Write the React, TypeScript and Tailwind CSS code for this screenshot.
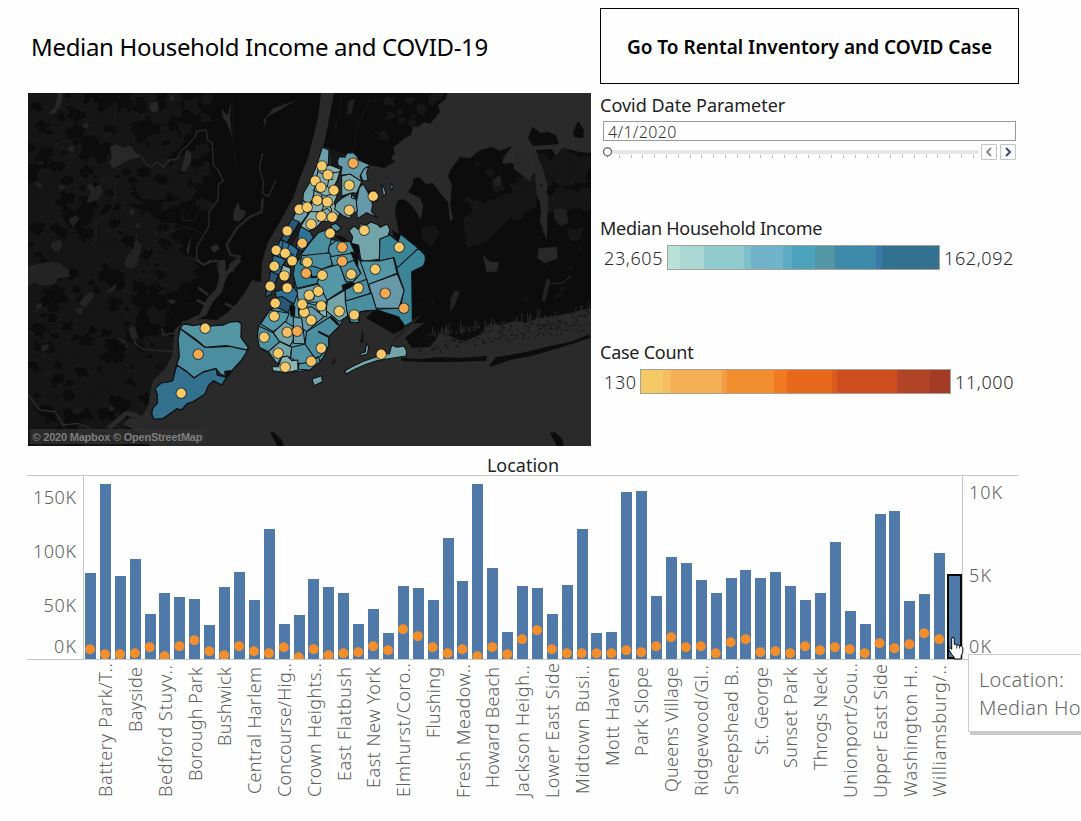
import React from "react";

const FONT = "font-['Noto_Sans','Open_Sans',sans-serif]";

/* ---------- map ---------- */

const LAND = [
  "28,93 321,93 318,118 313,138 308,158 301,175 293,198 281,220 268,242 262,262 261,282 252,280 245,292 237,303 228,312 217,320 205,319 182,321 178,335 176,353 168,366 153,380 149,398 148,412 141,420 131,417 122,424 140,432 150,446 28,446",
  "334,93 447,93 446,99 438,105 440,112 430,124 424,122 418,127 413,126 411,135 405,138 399,143 393,148 395,153 391,158 395,162 384,168 374,166 367,165 345,155 326,147 323,148 328,125",
  "397,201 403,199 408,202 416,211 421,220 423,205 420,198 408,192 413,184 413,179 419,177 426,184 433,183 440,193 448,202 450,222 453,218 450,205 452,185 448,176 451,169 460,157 470,158 480,150 492,147 500,151 512,146 505,156 502,163 512,163 520,170 533,173 543,180 540,200 541,214 546,238 547,225 545,200 548,185 541,165 536,150 552,149 556,156 563,148 580,152 591,153 591,308 570,313 555,316 540,318 525,323 514,321 500,326 490,323 479,335 465,341 455,338 440,333 430,347 412,348 405,338 424,323 406,324 390,318 385,300 398,262 392,230 399,234 397,222 395,212",
  "373,311 382,309 393,313 402,321 405,328 394,334 380,326 366,318",
  "528,138 532,127 536,129 540,133 548,132 556,135 559,144 548,145 533,146",
  "573,132 578,121 584,130 583,138 574,137",
  "401,358 420,359 440,357 460,358 487,356 486,361 450,362 420,362 402,361",
  "489,366 496,357 510,355 530,351 550,346 570,342 590,334 590,338 562,347 535,355 510,360 490,367",
  "550,433 555,432 562,439 564,446 557,446",
  "270,432 274,432 282,440 284,446 277,446",
];

const PATCHES = (() => {
  let s = 11;
  const rnd = () => {
    s = (s * 16807) % 2147483647;
    return s / 2147483647;
  };
  const blob = (cx: number, cy: number, r: number) => {
    const n = 13;
    const pts: string[] = [];
    for (let i = 0; i < n; i++) {
      const a = (i / n) * Math.PI * 2;
      const q = r * (0.45 + rnd() * 0.75);
      pts.push(`${(cx + Math.cos(a) * q * 1.2).toFixed(1)},${(cy + Math.sin(a) * q).toFixed(1)}`);
    }
    return pts.join(" ");
  };
  const out: { p: string; c: string }[] = [];
  for (let i = 0; i < 130; i++) {
    const x = 28 + Math.pow(rnd(), 1.5) * 150;
    const y = 93 + rnd() * 353;
    out.push({ p: blob(x, y, 8 + rnd() * 20), c: "#151515" });
  }
  for (let i = 0; i < 50; i++) out.push({ p: blob(120 + rnd() * 90, 93 + rnd() * 120, 2 + rnd() * 7), c: "#151515" });
  for (let i = 0; i < 170; i++) out.push({ p: blob(28 + rnd() * 150, 93 + rnd() * 345, 2 + rnd() * 6), c: "#0c0c0c" });
  for (let i = 0; i < 45; i++) out.push({ p: blob(28 + rnd() * 150, 93 + rnd() * 340, 1 + rnd() * 3), c: i % 3 ? "#1a1a1a" : "#232323" });
  for (let i = 0; i < 16; i++) out.push({ p: blob(520 + rnd() * 71, 160 + rnd() * 50, 6 + rnd() * 12), c: "#151515" });
  for (let i = 0; i < 24; i++) out.push({ p: blob(450 + rnd() * 141, 155 + rnd() * 80, 2 + rnd() * 6), c: "#151515" });
  for (let i = 0; i < 28; i++) out.push({ p: blob(370 + rnd() * 80, 95 + rnd() * 45, 1 + rnd() * 6), c: "#161616" });
  for (let i = 0; i < 12; i++) out.push({ p: blob(410 + rnd() * 175, 235 + rnd() * 70, 1 + rnd() * 3), c: "#131313" });
  return out;
})();

const MARSH = (() => {
  let s = 77;
  const rnd = () => {
    s = (s * 16807) % 2147483647;
    return s / 2147483647;
  };
  const land: string[] = [];
  const water: string[] = [];
  for (let i = 0; i < 260; i++) {
    const x = 420 + rnd() * 168;
    const y = 353 - (x - 420) * 0.14 - rnd() * 24;
    land.push(`M${x.toFixed(1)} ${y.toFixed(1)}l${(rnd() * 4 - 2).toFixed(1)} ${(rnd() * 4 - 2).toFixed(1)}l${(rnd() * 3).toFixed(1)} ${(rnd() * 2).toFixed(1)}`);
  }
  for (let i = 0; i < 80; i++) {
    const x = 430 + rnd() * 160;
    const y = 338 - (x - 430) * 0.14 - rnd() * 3;
    water.push(`M${x.toFixed(1)} ${y.toFixed(1)}l${(rnd() * 2 - 1).toFixed(1)} ${(-2 - rnd() * rnd() * 12).toFixed(1)}`);
  }
  return { land: land.join(""), water: water.join("") };
})();

const DISTRICTS: [string, string][] = [
  ["#5496a4", "150,345 205,278 240,268 245,300 270,300 310,330 330,362 388,363 430,355 440,400 465,445 450,505 378,510 330,515 325,545 300,548 290,520 270,555 235,590 236,618 218,655 180,690 110,698 85,665 55,640 28,620 22,590 26,558 60,510 80,500 130,505 135,440 130,400"],
  ["#6a9fab", "217,22 237,30 235,72 212,95 203,66"],
  ["#73a4ab", "203,68 212,95 200,130 190,175 175,195 158,190 160,160 180,125"],
  ["#8ab0ae", "205,85 240,75 272,88 262,120 252,140 262,165 252,190 270,215 262,242 215,245 200,262 165,280 150,262 180,215 188,178"],
  ["#6899a9", "263,60 268,50 285,52 290,40 310,38 320,48 326,60 362,76 342,90 330,108 335,125 300,104 272,105 276,82 264,76"],
  ["#6899a9", "342,86 357,78 350,98 354,122 338,122 332,105"],
  ["#79a6a9", "275,108 300,102 335,125 320,160 308,158 275,168"],
  ["#6699a9", "328,142 340,132 350,150 362,172 368,195 364,215 382,233 350,218 322,236 318,190"],
  ["#6f9fa6", "258,190 275,175 302,160 318,176 322,215 305,220 300,236 280,228 254,208"],
  ["#6699a9", "394,134 403,145 408,162 400,168 397,150"],
  ["#6699a9", "424,130 430,140 425,150 422,142"],
  ["#6fa2ac", "160,182 180,195 172,225 152,252 128,238 140,210"],
  ["#2c5876", "125,236 148,246 125,285 110,310 92,300"],
  ["#2f7295", "150,258 180,275 190,292 158,332 138,325"],
  ["#2f7295", "92,298 130,318 145,330 132,368 110,362 70,346"],
  ["#2d6a90", "70,346 108,358 95,385 88,405 60,398"],
  ["#8fb5b3", "98,375 122,385 120,415 105,428 88,410"],
  ["#2b5674", "62,393 85,405 72,440 62,465 45,470 55,430"],
  ["#4b8e9f", "205,278 238,266 243,300 235,338 195,350 152,345 178,310"],
  ["#4b8e9f", "243,256 258,250 274,264 262,275 246,266"],
  ["#3c8598", "134,375 155,348 200,350 240,340 245,375 216,385 205,430 140,445 130,405"],
  ["#4b8e9f", "155,347 240,338 247,375 215,388 195,380 150,372"],
  ["#5395a4", "237,318 258,302 300,305 318,345 245,350 236,335"],
  ["#5395a4", "240,350 315,338 322,360 300,372 252,385"],
  ["#5597a6", "215,388 270,372 285,420 298,438 255,465 230,482 200,435"],
  ["#4b8e9f", "270,378 312,360 332,400 310,425 288,425"],
  ["#73a4aa", "297,272 312,258 325,268 332,250 345,258 362,246 384,254 390,262 412,252 420,270 414,288 390,298 388,358 342,364 332,358 326,316 304,310 308,290"],
  ["#3c8598", "390,297 420,285 444,305 452,282 505,325 442,388 432,353 388,363"],
  ["#5596a6", "330,362 388,363 430,353 441,400 355,434 342,395"],
  ["#3c8598", "440,385 505,325 525,345 526,362 520,378 485,395 487,545 465,558 445,530 375,508 450,505 462,450 445,402"],
  ["#6899aa", "356,433 442,402 462,452 447,505 378,505"],
  ["#4b8e9f", "285,450 312,432 350,418 362,460 288,484"],
  ["#4b8e9f", "285,484 365,460 380,510 345,512 330,515 325,548 302,546 290,515"],
  ["#6a9fac", "140,448 205,432 232,482 215,500 145,482"],
  ["#73a4aa", "232,482 285,450 286,485 293,528 268,545 228,512"],
  ["#8fb5b3", "200,490 228,488 230,530 212,528"],
  ["#6899aa", "145,505 185,500 222,530 170,575 150,560"],
  ["#4b8e9f", "170,575 245,528 270,556 236,590 236,618 210,650 192,655 165,612"],
  ["#2f7295", "75,455 130,440 143,460 132,492 98,472 80,478"],
  ["#2b5674", "80,472 98,470 126,490 115,518 76,500"],
  ["#5496a4", "60,510 118,520 106,548 70,575 32,552"],
  ["#4f93a2", "26,558 70,578 90,605 55,635 28,622 22,590"],
  ["#73a4aa", "70,578 105,545 130,560 130,600 120,618 88,604"],
  ["#6a9fac", "130,530 155,535 165,612 130,610"],
  ["#73a4aa", "55,635 90,605 125,622 122,652 95,650 82,672"],
  ["#5395a5", "125,622 165,612 195,655 186,672 145,670 122,652"],
  ["#8fb5b3", "65,680 85,680 95,652 112,648 125,662 143,660 144,690 110,698 70,692"],
  ["#5395a5", "146,672 186,665 205,650 210,665 180,690 146,688"],
  ["#73a4aa", "284,692 310,678 340,664 375,652 400,640 418,642 425,616 442,622 462,618 470,634 468,648 430,654 380,662 345,674 310,690 290,702"],
  ["#73a4aa", "186,717 215,707 217,725 192,737"],
  ["#73a4aa", "350,608 356,622 352,642 332,647 330,641 346,636"],
];

const INNER_LINES =
  "M188,150 226,168 255,160M200,130 232,140 262,165M215,165 220,200 205,245M188,178 250,195M232,140 240,100 272,95M230,170 245,210 240,240M180,215 215,215M100,300 92,350M118,312 100,360M80,325 132,345M75,375 100,385M170,450 182,482M200,440 190,480M305,162 320,160 320,178 304,174ZM210,215 232,205 262,240M205,95 250,120M150,485 230,488M205,575 236,592";

const DOTS: [number, number, number][] = [
  [215, 77, 0], [309, 69, 2], [233, 104, 0], [195, 122, 0], [212, 141, 0], [251, 150, 0], [297, 135, 0], [369, 168, 0],
  [201, 180, 0], [231, 185, 0], [147, 207, 0], [171, 201, 0], [297, 210, 0], [213, 228, 0], [246, 231, 0], [183, 252, 0],
  [342, 270, 0], [111, 272, 0], [240, 279, 0], [156, 309, 1], [447, 321, 0], [78, 330, 0], [105, 339, 0], [276, 321, 2],
  [126, 362, 0], [171, 366, 0], [276, 363, 2], [72, 378, 0], [375, 387, 0], [102, 407, 0], [168, 399, 2], [216, 405, 0],
  [303, 402, 0], [60, 438, 0], [111, 443, 0], [324, 443, 0], [177, 465, 0], [204, 453, 0], [405, 459, 2], [75, 489, 0],
  [162, 516, 0], [156, 492, 0], [213, 497, 0], [461, 504, 2], [267, 513, 0], [312, 524, 0], [72, 528, 0], [183, 540, 0],
  [111, 576, 1], [141, 573, 2], [42, 591, 0], [84, 639, 0], [213, 624, 0], [105, 681, 0], [183, 663, 1], [393, 642, 0],
  [-135, 564, 0], [-156, 642, 2], [-207, 759, 0],
];
const DOT_FILL = ["#f7ca67", "#f7bd60", "#f6a94e"];

function CityMap() {
  return (
    <svg viewBox="28 93 563 353" width="563" height="353" className="block">
      <defs>
        <clipPath id="land">
          {LAND.map((p, i) => (
            <polygon key={i} points={p} />
          ))}
        </clipPath>
      </defs>
      <rect x="28" y="93" width="563" height="353" fill="#2a2a2a" />
      {LAND.map((p, i) => (
        <polygon key={i} points={p} fill="#0c0c0c" />
      ))}
      <g clipPath="url(#land)">
        {PATCHES.map((b, i) => (
          <polygon key={i} points={b.p} fill={b.c} />
        ))}
      </g>
      <path d={MARSH.land} fill="none" stroke="#141414" strokeWidth="0.9" />
      <path d={MARSH.water} fill="none" stroke="#2a2a2a" strokeWidth="0.9" />

      {/* rivers, lakes and reservoirs */}
      <g transform="translate(20 85) scale(0.33333)" fill="none" stroke="#2a2a2a" strokeLinejoin="round">
        <path strokeWidth="4" d="M365,215 378,238 395,245 412,230 430,247 450,225 470,222 485,195 500,185 525,155 530,140 558,133 563,165 577,175 580,240 595,255 610,290 596,295 594,345 568,380 566,425 552,450 530,485 530,520 548,540 590,525 598,570" />
        <path strokeWidth="4" d="M728,205 718,250 730,290 728,325 745,335 768,285" />
        <path strokeWidth="2.5" stroke="#222" d="M295,285 283,310 285,350 270,380 228,410 228,460 215,480 240,500M215,245 235,275 270,300 292,290M430,447 465,435 500,425 545,445M488,405 485,380 500,372M488,405 520,408 535,385 570,352 572,362" />
        <path strokeWidth="2" stroke="#222" strokeDasharray="6 5" d="M24,160 60,165 100,180 130,170 195,166M85,165 150,200 190,230 215,245M220,70 290,50 278,140 250,158M330,30 345,110 340,160 365,215M355,30 357,130M638,50 640,180 650,240" />
        <g fill="#282828" stroke="none">
          <path d="M270,185 290,178 310,188 330,182 345,200 365,215 340,222 320,228 300,240 280,250 268,235 275,215ZM498,195 515,205 512,235 495,260 482,258 492,225ZM392,55 412,50 415,75 400,85 390,72ZM115,24 130,24 125,55 105,85 85,88 105,65ZM605,70 622,92 635,50 630,95 636,155 622,118 608,96ZM730,105 760,70 830,45 780,75 740,95 735,125ZM640,380 655,350 660,372 678,380 670,400 655,410 640,405ZM515,452 505,510 498,495ZM570,485 590,478 600,490 582,505Z" />
          <path fill="#222" d="M350,440 352,470 365,480 352,540 335,553 312,540 320,515 340,490ZM200,300 215,295 225,308 240,298 250,320 235,345 200,355 212,325ZM24,545 60,535 75,542 115,530 150,555 140,570 24,570ZM95,470 120,465 130,480 115,505 90,490ZM115,305 128,298 138,308 120,318ZM145,405 165,390 180,400 160,425Z" />
        </g>
        <path strokeWidth="8" stroke="#252525" d="M728,340 725,380 690,395 650,430 620,480 632,510 660,515 630,540 640,560" />
      </g>
      <g transform="translate(20 260) scale(0.33333)" fill="none" stroke="#2a2a2a" strokeLinejoin="round">
        <path strokeWidth="5" d="M528,0 550,14 575,0M24,405 60,450 105,455 130,495 175,490 210,505M425,205 430,225 470,218" />
        <path strokeWidth="20" d="M605,0 608,50 598,90 570,120 548,165" />
        <path strokeWidth="12" d="M660,0 620,40 600,80M548,165 500,188 470,210 462,290 430,350 400,380 390,440 360,490" />
        <path strokeWidth="8" d="M535,82 565,105M530,120 560,135M615,130 665,155" />
        <path strokeWidth="14" d="M375,485 345,465 318,460 290,485 265,505" />
        <path strokeWidth="4" d="M340,220 345,250 370,268 460,275M295,235 320,250" />
        <path strokeWidth="2" stroke="#222" strokeDasharray="6 4" d="M24,160 80,140 130,100 200,45M24,305 60,295 100,255M400,70 440,110 450,160 480,190M320,60 310,130 320,185 340,210M495,80 500,130 530,130" />
        <path fill="#242424" stroke="none" d="M24,20 60,10 95,5 145,35 150,50 115,55 100,75 60,75 45,65 24,80ZM175,130 198,105 215,95 222,110 195,145ZM325,205 345,198 355,235 335,238ZM320,0 350,0 340,20 320,25ZM260,95 290,68 285,90 268,100Z" />
      </g>
      <g transform="translate(300 85) scale(0.33333)">
        <path fill="#282828" d="M650,190 668,215 685,225 700,262 690,290 655,262 640,250ZM700,200 725,240 740,290 720,300 745,330 740,465 720,410 725,360 710,330ZM715,490 770,485 773,520 735,535 712,520ZM548,510 570,530 597,532 590,560 560,560Z" />
        <path fill="#202020" d="M612,330 633,330 630,362 612,360ZM760,375 785,368 800,380 805,415 780,424 762,400ZM145,50 165,40 155,85 140,90ZM545,420 565,415 568,432 548,435ZM580,435 600,412 608,415 590,440ZM575,285 600,270 605,300 585,305Z" />
        <path fill="#151515" d="M490,400 560,350 620,325 700,330 680,370 630,400 560,470 500,490ZM365,425 405,420 420,445 395,485 365,460Z" />
        <path fill="none" stroke="#171717" strokeWidth="3" d="M125,30 120,80 100,150M210,40 170,130 160,200" />
      </g>
      <g transform="translate(300 260) scale(0.33333)" fill="#232323">
        <path d="M465,90 480,95 465,135 450,155 452,115ZM740,55 752,60 735,125 725,120ZM330,185 370,160 340,190 290,240 270,250Z" />
        <path d="M750,72 790,68 812,48" fill="none" stroke="#232323" strokeWidth="4" />
        <path d="M188,205 192,245 180,250ZM100,290 108,305 96,318Z" fill="#161616" />
      </g>

      {/* districts */}
      <g transform="translate(250 140) scale(0.33333)" stroke="#0d1114" strokeLinejoin="round">
        <path fill="#161616" stroke="none" d="M237,25 285,45 262,65 272,105 258,130 245,85Z" />
        <path fill="#0c0c0c" stroke="none" d="M300,300 325,310 330,390 345,410 320,380 302,345ZM335,155 375,150 385,185 370,180Z" />
        {DISTRICTS.map(([c, p], i) => (
          <polygon key={i} points={p} fill={c} strokeWidth="3.2" />
        ))}
        <path d={INNER_LINES} fill="none" strokeWidth="3" />
        <path d="M205,575 235,590M180,390 185,412 200,410M240,530 265,555" fill="none" strokeWidth="6" />
        <path fill="#0d0f10" stroke="none" d="M275,435 302,425 318,430 300,445 278,450ZM300,335 325,335 325,380 340,410 315,370ZM250,285 275,288 300,305 275,305ZM118,495 136,498 135,530 122,530Z" />
        <path fill="#1c1c1c" stroke="#0d1114" strokeWidth="3" d="M148,252 155,258 125,312 116,304Z" />
      </g>
      <g transform="translate(20 260) scale(0.33333)" stroke="#0d1114" strokeWidth="4" strokeLinejoin="round">
        <polygon fill="#4b8e9f" points="480,205 510,228 555,262 650,258 685,268 665,300 630,338 620,350 600,342 588,326 550,336 522,354 500,335 470,315 478,290 474,240" />
        <polygon fill="#5496a4" points="480,205 488,194 498,192 520,197 540,193 560,200 580,197 610,195 630,186 655,184 664,192 663,232 685,262 680,270 620,257 555,262 530,240" />
        <polygon fill="#33718f" points="470,315 500,335 522,354 550,336 588,326 592,345 620,352 605,375 580,362 565,378 555,402 520,425 500,432 485,450 470,446 455,458 430,475 402,478 395,462 398,445 412,430 412,405 405,385 425,368 440,367 458,362" />
        <polygon fill="#0d0f10" stroke="none" points="612,333 632,330 634,340 622,352 614,344" />
      </g>
      {DOTS.map(([x, y, k], i) => (
        <g key={i}>
          <circle cx={250.2 + x / 3} cy={140.2 + y / 3} r="5.7" fill="#1a1a1a" fillOpacity="0.7" />
          <circle cx={250.2 + x / 3} cy={140.2 + y / 3} r="4.7" fill={DOT_FILL[k]} />
        </g>
      ))}
      <rect x="30" y="429" width="175" height="15" fill="#2f2f2f" fillOpacity="0.8" />
      <text x="32.5" y="441" fontSize="11" fontWeight="700" textLength="170" fill="#7e7e7e" className="font-['Liberation_Sans',sans-serif]">
        © 2020 Mapbox © OpenStreetMap
      </text>
    </svg>
  );
}

/* ---------- chart ---------- */

const BARS = [
  369, 102, 378, 327, 492, 429, 441, 447, 525, 411, 366, 450, 237, 522, 495, 387, 411, 429, 522, 477, 549, 408, 414, 450, 264,
  393, 102, 354, 546, 408, 414, 492, 405, 237, 549, 546, 126, 123, 438, 321, 339, 390, 429, 384, 360, 384, 366, 408, 450, 429,
  276, 483, 522, 192, 183, 453, 432, 309,
];
const CASES = [
  597, 612, 612, 609, 591, 618, 588, 570, 603, 615, 588, 603, 609, 591, 621, 597, 615, 609, 606, 588, 600, 537, 558, 591, 609,
  597, 618, 591, 612, 567, 540, 597, 609, 609, 609, 609, 600, 606, 588, 561, 591, 588, 609, 576, 567, 606, 603, 609, 588, 600,
  591, 597, 609, 579, 594, 582, 549, 567,
];
const LABELS: [string, number, number][] = [
  ["Battery Park/T..", 663, 797], ["Bayside", 667, 732], ["Bedford Stuyv..", 665, 797], ["Borough Park", 667, 781],
  ["Bushwick", 667, 746], ["Central Harlem", 667, 794], ["Concourse/Hig..", 663, 797], ["Crown Heights..", 663, 797],
  ["East Flatbush", 667, 781], ["East New York", 667, 788], ["Elmhurst/Coro..", 663, 797], ["Flushing", 667, 738],
  ["Fresh Meadow..", 664, 798], ["Howard Beach", 667, 788], ["Jackson Heigh..", 665, 797], ["Lower East Side", 663, 798],
  ["Midtown Busi..", 665, 794], ["Mott Haven", 667, 766], ["Park Slope", 667, 756], ["Queens Village", 667, 792],
  ["Ridgewood/Gl..", 665, 796], ["Sheepshead B..", 665, 795], ["St. George", 667, 755], ["Sunset Park", 667, 768],
  ["Throgs Neck", 667, 770], ["Unionport/Sou..", 663, 798], ["Upper East Side", 664, 798], ["Washington H..", 665, 797],
  ["Williamsburg/..", 665, 797],
];
const barX = (i: number) => Math.round(85.02 + 14.895 * i + (i === 53 ? 0.2 : 0));

function Chart() {
  return (
    <svg viewBox="0 475 1081 346" width="1081" height="346" className="block" fontSize="18" fontWeight="300" fill="#606060">
      <path d="M27 475.5H1018M27 659.5H1018M83.5 475V659M962.5 475V659" stroke="#c6c6c6" fill="none" />
      <g fill="#4e79a9">
        {BARS.map((t, i) => (
          <rect key={i} x={barX(i)} y={450 + t / 3} width="11" height={209 - t / 3} />
        ))}
      </g>
      <rect x="948" y="575" width="13" height="83" fill="#4e79a9" stroke="#0a0a0a" strokeWidth="2" />
      <clipPath id="plot">
        <rect x="84" y="476" width="878" height="183" />
      </clipPath>
      <g fill="#f28e2b" clipPath="url(#plot)">
        {CASES.map((c, i) => (
          <circle key={i} cx={90.1 + 14.895 * i} cy={450.2 + c / 3} r="5" />
        ))}
      </g>
      <text x="33" y="504" textLength="43">150K</text>
      <text x="33" y="558" textLength="43">100K</text>
      <text x="43.5" y="612" textLength="32.5">50K</text>
      <text x="54" y="653" textLength="22">0K</text>
      <text x="969" y="499" textLength="33">10K</text>
      <text x="969" y="582" textLength="22">5K</text>
      <text x="969" y="653" textLength="22">0K</text>
      {LABELS.map(([t, a, b], i) => (
        <text key={t} transform={`translate(${112.2 + 29.79 * i} ${b}) rotate(-90)`} textLength={b - a}>
          {t}
        </text>
      ))}
      <path
        d="M951.7 639q0-1.6 1.3-1.6t1.3 1.6V644.300h1.900l1 .8h1.700l1 .8h1.300l1.600 1.500v5l-1.600 3.300V659h-7v-1.700l-2.700-3.300-2.700-4.500q-.1-1.600 1.300-1.700l1.600 1.500Z"
        fill="#fff"
        stroke="#000"
      />
      <path d="M956.800 645V648.500M959.600 646V648.500" stroke="#000" strokeWidth="0.8" fill="none" />
    </svg>
  );
}

/* ---------- side panel ---------- */

const INCOME: [string, number][] = [
  ["#b8e2d8", 12], ["#abd7d5", 24], ["#92cbce", 40], ["#7dc0ca", 7], ["#70b3c8", 32], ["#5cacc3", 9],
  ["#4ca3bb", 23], ["#5396a5", 20], ["#3d8aab", 41], ["#3b79ab", 6], ["#337190", 57],
];
const COUNT: [string, number][] = [
  ["#f5ca66", 22], ["#f6be60", 8], ["#f4af55", 51], ["#f39c45", 5], ["#f38e2e", 47], ["#f27b22", 13],
  ["#e8691c", 45], ["#dc5c1c", 5], ["#ce4e20", 60], ["#b14426", 33], ["#a23a24", 20],
];

function Ramp({ steps }: { steps: [string, number][] }) {
  return (
    <div className="flex h-[25px] flex-1 overflow-hidden border border-[#a5a29a]">
      {steps.map(([c, w]) => (
        <div key={c} style={{ backgroundColor: c, flexGrow: w, flexBasis: 0 }} />
      ))}
    </div>
  );
}

type LegendProps = {
  title: React.ReactNode;
  min: string;
  max: string;
  minClass: string;
  maxClass: string;
  steps: [string, number][];
};

function Legend({ title, min, max, minClass, maxClass, steps }: LegendProps) {
  return (
    <section className="h-[124px]">
      <h2 className="h-[29px] text-[18px] leading-[24px] font-normal whitespace-nowrap text-[#222]">{title}</h2>
      <div className="flex h-[25px] items-center pl-1 text-[18px] leading-[25px] font-light tracking-[0.6px] text-[#2a2a2a]">
        <span className={minClass}>{min}</span>
        <Ramp steps={steps} />
        <span className={maxClass}>{max}</span>
      </div>
    </section>
  );
}

function DateSlider() {
  return (
    <section className="h-[123px]">
      <h2 className="h-[28px] text-[18px] leading-[24px] font-normal text-[#222]">Covid Date Parameter</h2>
      <div className="ml-[3px] h-5 w-[413px] border border-[#999] pt-px pl-1 text-[16px] leading-[19px] font-light tracking-[0.35px] text-[#333]">
        4/1/2020
      </div>
      <div className="mt-[3px] ml-[2px] flex h-4 w-[414px]">
        <svg width="377" height="16" className="mr-0.5 block shrink-0">
          <rect x="5" y="6" width="371" height="4" fill="#e6e6e6" />
          {Array.from({ length: 32 }, (_, i) => (
            <rect key={i} x={Math.round(5 + i * 11.8)} y="11" width="1" height="3" fill="#bbb" />
          ))}
          <circle cx="5.5" cy="7.8" r="4" fill="#fff" stroke="#666" strokeWidth="1.3" />
        </svg>
        <button className="mr-[3px] flex h-4 w-4 items-center justify-center rounded-[1px] border border-[#c4c4c4]">
          <svg width="8" height="10" fill="none" stroke="#888" strokeWidth="1.8">
            <path d="M6 1 2 5l4 4" />
          </svg>
        </button>
        <button className="flex h-4 w-4 items-center justify-center rounded-[1px] border border-[#c4c4c4]">
          <svg width="8" height="10" fill="none" stroke="#3c4f66" strokeWidth="2">
            <path d="M2 1l4 4-4 4" />
          </svg>
        </button>
      </div>
    </section>
  );
}

export default function App() {
  return (
    <main className={`relative h-[821px] w-[1081px] overflow-hidden bg-[#fefefe] ${FONT}`}>
      <div className="flex h-[446px] pl-7">
        <div className="w-[564px] shrink-0">
          <h1 className="h-[93px] pt-[31px] pl-[3px] text-[24px] leading-[32px] font-normal whitespace-nowrap text-black">
            <span className="tracking-[-0.32px]">Median Household Income and COVID-19</span>
          </h1>
          <CityMap />
        </div>
        <aside className="ml-2 w-[419px] pt-2">
          <button className="mb-[9px] flex h-[76px] w-full items-center justify-center border border-black pt-0.5 text-[19px] font-semibold whitespace-nowrap text-black">
            Go To Rental Inventory and COVID Case
          </button>
          <DateSlider />
          <Legend
            title={<span className="tracking-[-0.27px]">Median Household Income</span>}
            min="23,605"
            max="162,092"
            minClass="w-[63px] pt-0.5"
            maxClass="w-[79px] pl-1 pt-0.5"
            steps={INCOME}
          />
          <Legend
            title={<span className="tracking-[-0.25px]">Case Count</span>}
            min="130"
            max="11,000"
            minClass="w-[36px] pt-0.5"
            maxClass="w-[68px] pl-1 pt-0.5"
            steps={COUNT}
          />
        </aside>
      </div>
      <h2 className="h-[29px] w-[1046px] pt-[7px] text-center text-[18px] leading-[24px] font-normal text-[#222]">Location</h2>
      <Chart />
      <div className="absolute top-[654px] left-[968px] h-[78px] w-[160px] border border-[#ccc] bg-white pt-[11px] pl-[10px] text-[20px] leading-[28px] font-light tracking-[0.3px] whitespace-nowrap text-[#666] shadow-[2px_3px_0_#c8c8c8]">
        <p>Location:</p>
        <p>Median Ho</p>
      </div>
    </main>
  );
}
